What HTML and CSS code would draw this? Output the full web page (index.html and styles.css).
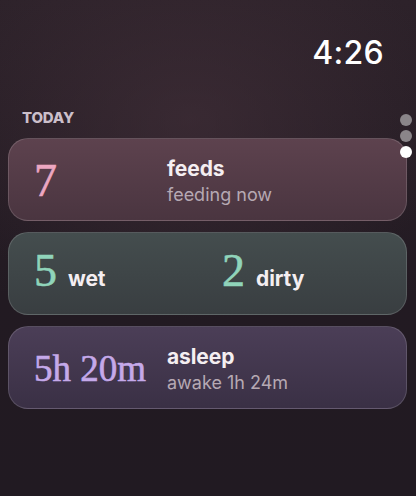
FILE: index.html
```html
<!DOCTYPE html>
<html>
<head>
<meta charset="utf-8">
<link rel="stylesheet" href="styles.css">
</head>
<body>
<div class="screen">
  <header class="status">
    <span class="time">4:26</span>
  </header>
  <div class="section-title">TODAY</div>
  <div class="pager">
    <span class="dot"></span>
    <span class="dot"></span>
    <span class="dot active"></span>
  </div>
  <div class="cards">
    <div class="card card-feeds">
      <div class="num num-pink">7</div>
      <div class="labels">
        <div class="label">feeds</div>
        <div class="sub">feeding now</div>
      </div>
    </div>
    <div class="card card-diapers">
      <div class="pair">
        <span class="num num-mint">5</span>
        <span class="label">wet</span>
      </div>
      <div class="pair">
        <span class="num num-mint">2</span>
        <span class="label">dirty</span>
      </div>
    </div>
    <div class="card card-sleep">
      <div class="num num-lav num-small">5h 20m</div>
      <div class="labels">
        <div class="label">asleep</div>
        <div class="sub">awake 1h 24m</div>
      </div>
    </div>
  </div>
</div>
</body>
</html>
```
FILE: styles.css
```css
html, body {
  margin: 0;
  padding: 0;
}
body {
  width: 416px;
  height: 496px;
  overflow: hidden;
  background: #231b23;
  font-family: "Inter", "Roboto", sans-serif;
}
.screen {
  position: relative;
  width: 416px;
  height: 496px;
  background:
    radial-gradient(ellipse 260px 200px at 190px 120px, rgba(70, 50, 60, 0.55), rgba(70, 50, 60, 0) 100%),
    linear-gradient(#2d222a, #221a22 60%, #211a22);
}
.status {
  display: flex;
  justify-content: flex-end;
  padding: 34px 32px 0 0;
  height: 38px;
}
.time {
  color: #ffffff;
  font-size: 32px;
  line-height: 38px;
  font-weight: 500;
  letter-spacing: 0.3px;
}
.section-title {
  margin-top: 37px;
  padding-left: 22px;
  color: #cbbfca;
  font-size: 15px;
  font-weight: 800;
  line-height: 18px;
  letter-spacing: -0.2px;
}
.pager {
  position: absolute;
  left: 400px;
  top: 114px;
  display: flex;
  flex-direction: column;
  gap: 4px;
}
.dot {
  width: 12px;
  height: 12px;
  border-radius: 50%;
  background: #8a8589;
}
.dot.active {
  background: #ffffff;
}
.cards {
  margin-top: 11px;
  padding: 0 9px 0 8px;
  display: flex;
  flex-direction: column;
  gap: 11px;
}
.card {
  height: 81px;
  border-radius: 20px;
  border: 1px solid rgba(255, 255, 255, 0.15);
  display: grid;
  grid-template-columns: 133px 1fr;
  align-items: center;
  padding-left: 25px;
}
.card-feeds {
  background: linear-gradient(#5d424e, #4a3540);
}
.card-diapers {
  background: linear-gradient(#444d4e, #393e41);
  grid-template-columns: 188px 1fr;
}
.card-sleep {
  background: linear-gradient(#4b3e57, #3a3045);
}
.num {
  font-family: "Liberation Serif", "DejaVu Serif", serif;
  font-size: 46px;
  line-height: 50px;
  padding-top: 3px;
  -webkit-text-stroke: 0.6px currentColor;
}
.num-small {
  font-size: 37px;
  padding-top: 2px;
}
.num-pink { color: #eca7c1; }
.num-mint { color: #90d4ba; }
.num-lav { color: #c5a9ea; }
.labels {
  display: flex;
  flex-direction: column;
  padding-top: 4px;
}
.label {
  color: #f4eef1;
  font-size: 21px;
  font-weight: 700;
  line-height: 25px;
  letter-spacing: -0.1px;
}
.sub {
  color: #b6a9b3;
  font-size: 18px;
  font-weight: 400;
  line-height: 24px;
  margin-top: 2px;
}
.pair {
  display: flex;
  align-items: baseline;
  gap: 11px;
}
.pair .label {
  line-height: 50px;
}
```
